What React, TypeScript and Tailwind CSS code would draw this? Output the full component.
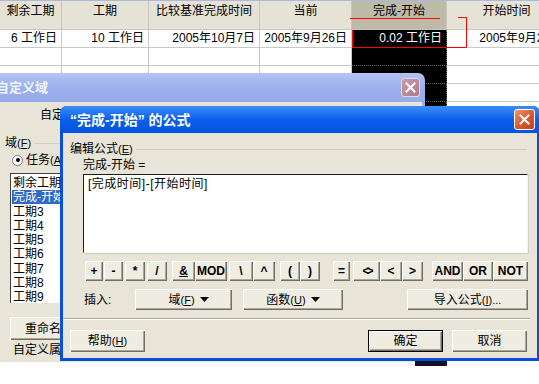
import React from "react";

const btn =
  "flex items-center justify-center bg-[#efece2] shadow-[inset_1px_1px_0_#ffffff,inset_-1px_-1px_0_#716f64,inset_-2px_-2px_0_#aca899] text-[12px] leading-[14px] shrink-0";

function Mn({ c }: { c: string }) {
  return (
    <span className="text-[11px]">
      (<span className="underline">{c}</span>)
    </span>
  );
}

function Table() {
  const grid = "grid grid-cols-[62px_87px_111px_92px_95px_120px]";
  const hd =
    "h-[29px] border-r border-b border-[#c9c7bb] text-center pt-[3px] text-[12px] leading-[14px]";
  const cell =
    "h-[18px] border-r border-b border-[#c8c8c8] text-right pr-[4px] text-[12px] leading-[17px] whitespace-nowrap overflow-hidden";
  const blk =
    "h-[18px] bg-black border-r border-b border-dotted border-[#6a6a6a] text-right pr-[4px] text-white text-[12px] leading-[17px] whitespace-nowrap";
  const empty = [0, 1, 2, 3];
  return (
    <div className="border-t border-[#a9b8dc] w-[567px]">
      <div className={grid}>
        <div className={`${hd} bg-[#e6e3d6]`}>剩余工期</div>
        <div className={`${hd} bg-[#e6e3d6]`}>工期</div>
        <div className={`${hd} bg-[#e6e3d6]`}>比较基准完成时间</div>
        <div className={`${hd} bg-[#e6e3d6]`}>当前</div>
        <div className={`${hd} bg-[#bdbaa8]`}>完成-开始</div>
        <div className={`${hd} bg-[#e6e3d6]`}>开始时间</div>

        <div className={cell}>6 工作日</div>
        <div className={cell}>10 工作日</div>
        <div className={cell}>2005年10月7日</div>
        <div className={cell}>2005年9月26日</div>
        <div className={blk}>0.02 工作日</div>
        <div className={`${cell} text-left pl-[26px]`}>2005年9月26日</div>

        {empty.map((i) => (
          <React.Fragment key={i}>
            <div className={cell}></div>
            <div className={cell}></div>
            <div className={cell}></div>
            <div className={cell}></div>
            <div className={blk}></div>
            <div className={cell}></div>
          </React.Fragment>
        ))}
      </div>
    </div>
  );
}

function CloseX({ active }: { active: boolean }) {
  return (
    <div
      className={
        active
          ? "w-[21px] h-[21px] rounded-[3px] border border-white bg-gradient-to-br from-[#f0926e] via-[#dc5a32] to-[#c2401a] flex items-center justify-center shrink-0"
          : "w-[19px] h-[19px] rounded-[3px] border border-[#d8ddf5] bg-gradient-to-br from-[#c99aa8] to-[#b07a8c] flex items-center justify-center shrink-0"
      }
    >
      <svg width="11" height="11" viewBox="0 0 11 11">
        <path d="M1.5 1.5 L9.5 9.5 M9.5 1.5 L1.5 9.5" stroke="#ffffff" strokeWidth="2" strokeLinecap="square" />
      </svg>
    </div>
  );
}

function LeftDialog() {
  const items = ["剩余工期", "完成-开始", "工期3", "工期4", "工期5", "工期6", "工期7", "工期8", "工期9"];
  return (
    <div className="absolute left-[-40px] top-[73px] w-[465px] h-[289px] flex flex-col">
      <div className="h-[29px] shrink-0 rounded-tr-[7px] bg-gradient-to-b from-[#b4c4f2] via-[#9cb0ec] to-[#96abe9] flex items-center pl-[36px] pr-[5px]">
        <span className="text-[13px] font-bold text-[#f0f3fd] leading-[16px]">自定义域</span>
        <div className="ml-auto">
          <CloseX active={false} />
        </div>
      </div>
      <div className="flex-1 bg-[#e8e5d8] flex flex-col pl-[45px] pt-[5px] border-r-[3px] border-[#9cb0ec]">
        <div className="ml-[35px] h-[16px] leading-[16px]">自定</div>
        <div className="mt-[12px] h-[16px] flex items-center">
          <span className="leading-[16px]">
            域<Mn c="F" />
          </span>
          <div className="ml-[3px] w-[80px] border-t border-[#d0d0bf]"></div>
        </div>
        <div className="mt-[1px] ml-[7px] h-[16px] flex items-center">
          <div className="w-[11px] h-[11px] rounded-full bg-white border border-[#7a7a7a] flex items-center justify-center">
            <div className="w-[4px] h-[4px] rounded-full bg-black"></div>
          </div>
          <span className="ml-[3px] leading-[16px]">
            任务<Mn c="A" />
          </span>
        </div>
        <div className="mt-[5px] ml-[5px] w-[140px] h-[130px] bg-white border-l border-t border-[#404040] pt-[2px] pl-[1px] flex flex-col">
          {items.map((t, i) => (
            <div
              key={t}
              className={
                i === 1
                  ? "h-[14px] leading-[14px] bg-[#316ac5] text-white pl-[1px]"
                  : "h-[14px] leading-[14px] pl-[1px] mt-[0.25px]"
              }
            >
              {t}
            </div>
          ))}
        </div>
        <div className={`${btn} mt-[14px] ml-[5px] w-[120px] h-[23px] justify-start pl-[15px]`}>重命名</div>
        <div className="mt-[2px] ml-[8px] h-[16px] leading-[16px]">自定义属</div>
      </div>
    </div>
  );
}

function FormulaDialog() {
  const ops: { t: React.ReactNode; w: number; ml: number }[] = [
    { t: "+", w: 18, ml: 0 },
    { t: "-", w: 19, ml: 1 },
    { t: "*", w: 20, ml: 2 },
    { t: "/", w: 20, ml: 2 },
    { t: <span className="underline">&amp;</span>, w: 23, ml: 5 },
    { t: "MOD", w: 32, ml: 0 },
    { t: "\\", w: 24, ml: 2 },
    { t: "^", w: 22, ml: 0 },
    { t: "(", w: 20, ml: 5 },
    { t: ")", w: 20, ml: 0 },
    { t: "=", w: 17, ml: 13 },
    { t: <span className="tracking-[-3px]">&lt;&gt;</span>, w: 27, ml: 3 },
    { t: "<", w: 22, ml: 0 },
    { t: ">", w: 21, ml: 0 },
    { t: "AND", w: 31, ml: 9 },
    { t: "OR", w: 30, ml: 0 },
    { t: "NOT", w: 35, ml: 0 },
  ];
  const arrow = (
    <svg width="9" height="5" viewBox="0 0 9 5" className="ml-[5px]">
      <path d="M0 0 H9 L4.5 5 Z" fill="#000" />
    </svg>
  );
  return (
    <div className="absolute left-[60px] top-[106px] w-[480px] h-[255px] flex flex-col rounded-t-[7px] overflow-hidden bg-[#0a4fdc]">
      <div className="h-[27px] shrink-0 flex items-center pl-[10px] pr-[5px] bg-gradient-to-b from-[#3d8cf7] via-[#0b5fea] to-[#0553df]">
        <span className="text-white font-bold text-[14px] leading-[16px]">“完成-开始” 的公式</span>
        <div className="ml-auto">
          <CloseX active={true} />
        </div>
      </div>
      <div className="flex-1 mx-[3px] mb-[3px] bg-[#e8e5d8] flex flex-col">
        <div className="mt-[9px] ml-[7px] mr-[10px] h-[15px] flex items-center">
          <span className="leading-[15px]">
            编辑公式<Mn c="E" />
          </span>
          <div className="flex-1 ml-[3px] border-t border-[#cfcdb9]"></div>
        </div>
        <div className="ml-[20px] h-[16px] leading-[16px]">完成-开始 =</div>
        <div className="mt-[1px] ml-[20px] w-[445px] h-[79px] bg-white border-t border-l border-[#1c1c1c] border-r border-b border-r-[#f5f4ef] border-b-[#f5f4ef] pl-[4px] pt-[2px] leading-[14px] tracking-[0.5px] shadow-[1px_1px_0_#d4d0c8]">
          [完成时间]-[开始时间]
        </div>
        <div className="mt-[8px] ml-[22px] h-[20px] flex">
          {ops.map((o, i) => (
            <div
              key={i}
              className={`${btn} h-[20px] text-[11px] font-semibold`}
              style={{ width: o.w, marginLeft: o.ml }}
            >
              {o.t}
            </div>
          ))}
        </div>
        <div className="mt-[8px] h-[21px] flex items-center">
          <span className="ml-[21px] w-[51px] leading-[16px]">插入:</span>
          <div className={`${btn} w-[97px] h-[21px]`}>
            <span className="ml-[10px]">
              域<Mn c="F" />
            </span>
            {arrow}
          </div>
          <div className={`${btn} ml-[11px] w-[100px] h-[21px]`}>
            <span>
              函数<Mn c="U" />
            </span>
            {arrow}
          </div>
          <div className={`${btn} ml-[64px] w-[121px] h-[21px]`}>
            导入公式<Mn c="I" />
            <span className="text-[11px]">...</span>
          </div>
        </div>
        <div className="mt-[8px] mr-[7px] border-t border-[#aca899] border-b border-b-white"></div>
        <div className="mt-[10px] h-[22px] flex">
          <div className={`${btn} ml-[7px] w-[75px] h-[22px]`}>
            帮助<Mn c="H" />
          </div>
          <div className={`${btn} ml-auto w-[75px] h-[22px] border border-black`}>确定</div>
          <div className={`${btn} ml-[9px] mr-[10px] w-[75px] h-[22px]`}>取消</div>
        </div>
      </div>
    </div>
  );
}

export default function App() {
  return (
    <div className="relative w-[539px] h-[384px] overflow-hidden bg-white text-black text-[12px] font-['Liberation_Sans','Noto_Sans_CJK_SC',sans-serif]">
      <Table />
      <LeftDialog />
      <FormulaDialog />
      <svg className="absolute left-0 top-0 pointer-events-none" width="539" height="60">
        <path d="M350 18.5 H440" stroke="#ff0000" strokeWidth="1" fill="none" />
        <path d="M352.5 30 V47.5 H466.5 V17.5 H458" stroke="#ff0000" strokeWidth="1" fill="none" />
      </svg>
      <div className="absolute left-[415px] top-[361px] w-[32px] h-[5px] bg-[#101020]"></div>
    </div>
  );
}
